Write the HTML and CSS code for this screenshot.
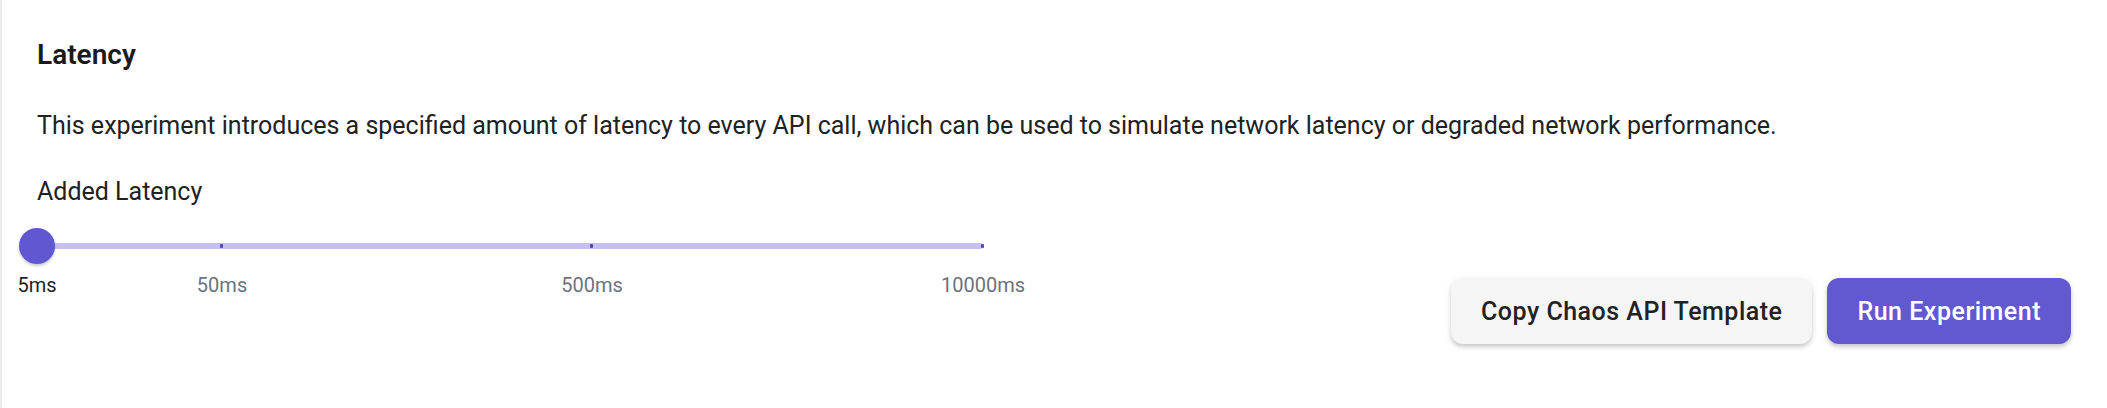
FILE: index.html
```html
<!DOCTYPE html>
<html lang="en">
<head>
  <meta charset="utf-8">
  <title>Latency Experiment</title>
  <link rel="stylesheet" href="styles.css">
</head>
<body>
  <div class="card">
    <h2 class="title">Latency</h2>
    <p class="description">This experiment introduces a specified amount of latency to every API call, which can be used to simulate network latency or degraded network performance.</p>

    <div class="controls">
      <div class="slider-block">
        <div class="label">Added Latency</div>
        <div class="slider">
          <div class="track"></div>
          <span class="tick" style="left: 19.56%"></span>
          <span class="tick" style="left: 58.67%"></span>
          <span class="tick" style="left: 100%"></span>
          <span class="thumb" style="left: 0%"></span>
        </div>
        <div class="marks">
          <span class="mark active" style="left: 0%">5ms</span>
          <span class="mark" style="left: 19.56%">50ms</span>
          <span class="mark" style="left: 58.67%">500ms</span>
          <span class="mark" style="left: 100%">10000ms</span>
        </div>
      </div>

      <div class="actions">
        <button class="btn btn-light">Copy Chaos API Template</button>
        <button class="btn btn-primary">Run Experiment</button>
      </div>
    </div>
  </div>
</body>
</html>
```

FILE: styles.css
```css
body {
  margin: 0;
  background: #fff;
  font-family: Roboto, "Helvetica Neue", Arial, sans-serif;
  color: #212121;
}
.card {
  height: 408px;
  box-sizing: border-box;
  border-left: 2px solid #ececec;
  padding: 38px 36px 0 35px;
}
.title {
  margin: 0;
  font-size: 28px;
  line-height: 34px;
  font-weight: 600;
  color: #1a1a1a;
}
.description {
  margin: 38px 0 0;
  font-size: 25px;
  line-height: 32px;
}
.controls {
  display: flex;
  justify-content: space-between;
  align-items: flex-end;
  margin-top: 34px;
}
.slider-block {
  width: 946px;
  padding-bottom: 47px;
}
.label {
  font-size: 25px;
  line-height: 32px;
}
.slider {
  position: relative;
  height: 36px;
  margin-top: 20px;
}
.track {
  position: absolute;
  left: 0;
  right: 0;
  top: 15px;
  height: 6px;
  border-radius: 3px;
  background: #c6c0ee;
}
.tick {
  position: absolute;
  top: 16px;
  width: 3px;
  height: 4px;
  margin-left: -2px;
  border-radius: 1px;
  background: #5047c4;
}
.thumb {
  position: absolute;
  top: 0;
  width: 36px;
  height: 36px;
  margin-left: -18px;
  border-radius: 50%;
  background: #6058d1;
  box-shadow: 0 2px 3px rgba(0, 0, 0, 0.2);
}
.marks {
  position: relative;
  height: 24px;
  margin-top: 9px;
}
.mark {
  position: absolute;
  top: 0;
  transform: translateX(-50%);
  font-size: 20px;
  line-height: 24px;
  color: #6b7280;
  white-space: nowrap;
}
.mark.active { color: #1f1f1f; }
.actions {
  display: flex;
  gap: 15px;
}
.btn {
  height: 66px;
  padding: 0 30px;
  border: 0;
  border-radius: 12px;
  font-family: Roboto, "Helvetica Neue", Arial, sans-serif;
  font-size: 25px;
  font-weight: 500;
  letter-spacing: 0.5px;
  box-shadow: 0 3px 4px rgba(0, 0, 0, 0.18), 0 1px 8px rgba(0, 0, 0, 0.06);
}
.btn-light {
  background: #f5f5f5;
  color: #222;
}
.btn-primary {
  background: #6259d1;
  color: #fff;
}
```
